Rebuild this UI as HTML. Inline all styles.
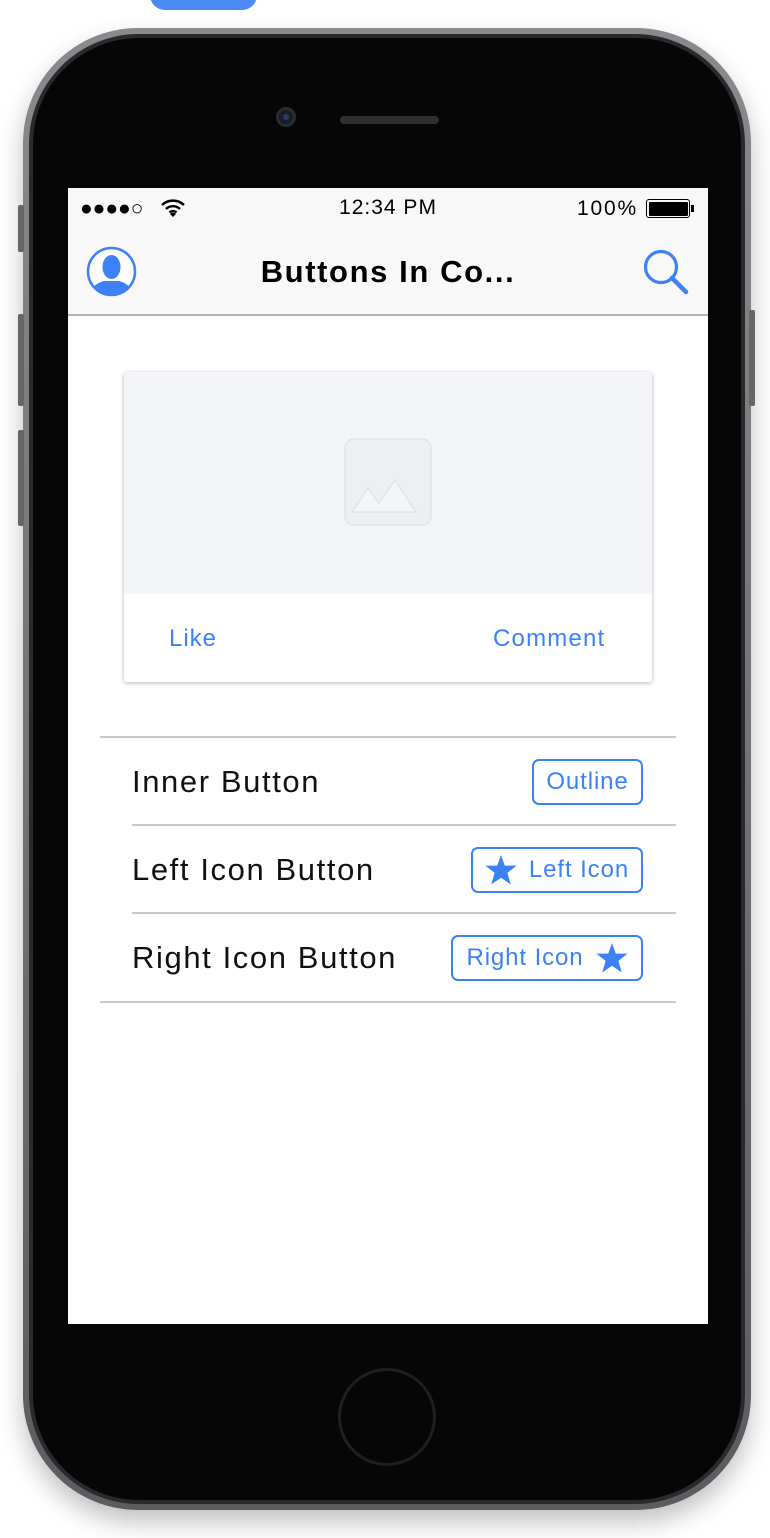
<!DOCTYPE html>
<html><head><style>
*{margin:0;padding:0;box-sizing:border-box}
body{width:770px;height:1538px;background:#fff;position:relative;overflow:hidden;font-family:"Liberation Sans",sans-serif}
.a{position:absolute}
.btn{position:absolute;border:2px solid #3b82f6;border-radius:7px;color:#3b82f6;font-size:24px;letter-spacing:0.9px;display:flex;align-items:center;justify-content:center;gap:12px;right:127px}
.lbl{position:absolute;left:132px;font-size:31px;letter-spacing:1.6px;color:#111}
.ln{position:absolute;height:2px;background:#c8c7cc}
</style></head><body>
<div class="a" style="left:150px;top:-20px;width:107px;height:30px;border-radius:15px;background:#4a8af4"></div>
<div class="a" style="left:23px;top:28px;width:728px;height:1482px;border-radius:115px;background:linear-gradient(#8a8a8e,#5c5c60);box-shadow:0 12px 25px rgba(0,0,0,.25)"></div>
<div class="a" style="left:29px;top:34px;width:716px;height:1470px;border-radius:110px;background:#2a2a2c"></div>
<div class="a" style="left:33px;top:38px;width:708px;height:1462px;border-radius:106px;background:#060606"></div>
<div class="a" style="left:18px;top:205px;width:6px;height:47px;background:#666;border-radius:2px"></div>
<div class="a" style="left:18px;top:314px;width:6px;height:92px;background:#666;border-radius:2px"></div>
<div class="a" style="left:18px;top:430px;width:6px;height:96px;background:#666;border-radius:2px"></div>
<div class="a" style="left:749px;top:310px;width:6px;height:96px;background:#666;border-radius:2px"></div>
<div class="a" style="left:276px;top:107px;width:20px;height:20px;border-radius:50%;background:#1a1c24;border:3px solid #2a2c34"><div style="width:6px;height:6px;margin:4px;border-radius:50%;background:#2b3a70"></div></div>
<div class="a" style="left:340px;top:116px;width:99px;height:8px;border-radius:4px;background:#2e2e30"></div>
<div class="a" style="left:338px;top:1368px;width:98px;height:98px;border-radius:50%;border:3px solid #1e1f22"></div>
<div class="a" style="left:68px;top:188px;width:640px;height:1136px;background:#fff"></div>
<div class="a" style="left:68px;top:188px;width:640px;height:126px;background:#f8f8f8"></div>
<div class="a" style="left:68px;top:314px;width:640px;height:2px;background:#b2b2b2"></div>
<div class="a" style="left:80px;top:197px;font-size:21px;letter-spacing:0px;color:#000">●●●●○</div>
<svg class="a" style="left:160px;top:198px" width="26" height="20" viewBox="0 0 26 20"><path d="M2 7a16 16 0 0 1 22 0M6 11a10 10 0 0 1 14 0M9.5 14.5a5 5 0 0 1 7 0" stroke="#000" stroke-width="2.4" fill="none"/><path d="M13 19l-3-3a4 4 0 0 1 6 0z" fill="#000"/></svg>
<div class="a" style="left:0;width:776px;top:196px;text-align:center;font-size:21px;letter-spacing:1px;color:#000">12:34 PM</div>
<div class="a" style="left:577px;top:197px;font-size:21px;letter-spacing:1.8px;color:#000">100%</div>
<div class="a" style="left:646px;top:199px;width:44px;height:19px;border:1.5px solid #000;border-radius:3px;padding:1.5px"><div style="width:100%;height:100%;background:#000;border-radius:1px"></div></div>
<div class="a" style="left:691px;top:205px;width:3px;height:7px;background:#000"></div>
<svg class="a" style="left:86px;top:246px" width="51" height="51" viewBox="0 0 51 51"><defs><clipPath id="c"><circle cx="25.5" cy="25.5" r="22.5"/></clipPath></defs><circle cx="25.5" cy="25.5" r="23.5" fill="#fff" stroke="#3b82f6" stroke-width="2.5"/><g clip-path="url(#c)" fill="#3b82f6"><ellipse cx="25.5" cy="21" rx="9" ry="12"/><path d="M4 52c0-10 6-15 14-17h15c8 2 14 7 14 17z"/></g></svg>
<div class="a" style="left:0;width:776px;top:254px;text-align:center;font-size:31px;letter-spacing:1.6px;font-weight:bold;color:#000">Buttons In Co...</div>
<svg class="a" style="left:641px;top:247px" width="50" height="48" viewBox="0 0 50 48"><circle cx="20" cy="20" r="15.5" stroke="#3b82f6" stroke-width="3.2" fill="none"/><path d="M31 31l14 14" stroke="#3b82f6" stroke-width="4.5" stroke-linecap="round"/></svg>
<div class="a" style="left:124px;top:372px;width:528px;height:310px;border-radius:3px;background:#fff;box-shadow:0 1px 4px rgba(0,0,0,.3);overflow:hidden">
<div style="height:222px;background:#f4f5f8"></div></div>
<svg class="a" style="left:344px;top:438px" width="88" height="88" viewBox="0 0 88 88"><rect x="1" y="1" width="86" height="86" rx="9" fill="#eeeff2" stroke="#e2e3e8" stroke-width="1.5"/><path d="M8 74l16-24 11 15 16-23 21 32z" fill="#f4f5f8" stroke="#e2e3e8" stroke-width="1.5"/></svg>
<div class="a" style="left:169px;top:625px;font-size:24px;letter-spacing:1px;color:#3b82f6">Like</div>
<div class="a" style="left:493px;top:625px;font-size:24px;letter-spacing:1.2px;color:#3b82f6">Comment</div>
<div class="ln" style="left:100px;top:736px;width:576px"></div>
<div class="ln" style="left:132px;top:824px;width:544px"></div>
<div class="ln" style="left:132px;top:912px;width:544px"></div>
<div class="ln" style="left:100px;top:1001px;width:576px"></div>
<div class="lbl" style="top:764px">Inner Button</div>
<div class="lbl" style="top:852px">Left Icon Button</div>
<div class="lbl" style="top:940px">Right Icon Button</div>
<div class="btn" style="top:759px;width:111px;height:46px">Outline</div>
<div class="btn" style="top:847px;width:172px;height:46px"><svg width="32" height="30" viewBox="0 0 24 23"><path d="M12 0l2.9 8.1H24l-7.1 5.6 2.6 8.9L12 17.4l-7.5 5.2 2.6-8.9L0 8.1h9.1z" fill="#3b82f6"/></svg>Left Icon</div>
<div class="btn" style="top:935px;width:192px;height:46px">Right Icon<svg width="32" height="30" viewBox="0 0 24 23"><path d="M12 0l2.9 8.1H24l-7.1 5.6 2.6 8.9L12 17.4l-7.5 5.2 2.6-8.9L0 8.1h9.1z" fill="#3b82f6"/></svg></div>
</body></html>
